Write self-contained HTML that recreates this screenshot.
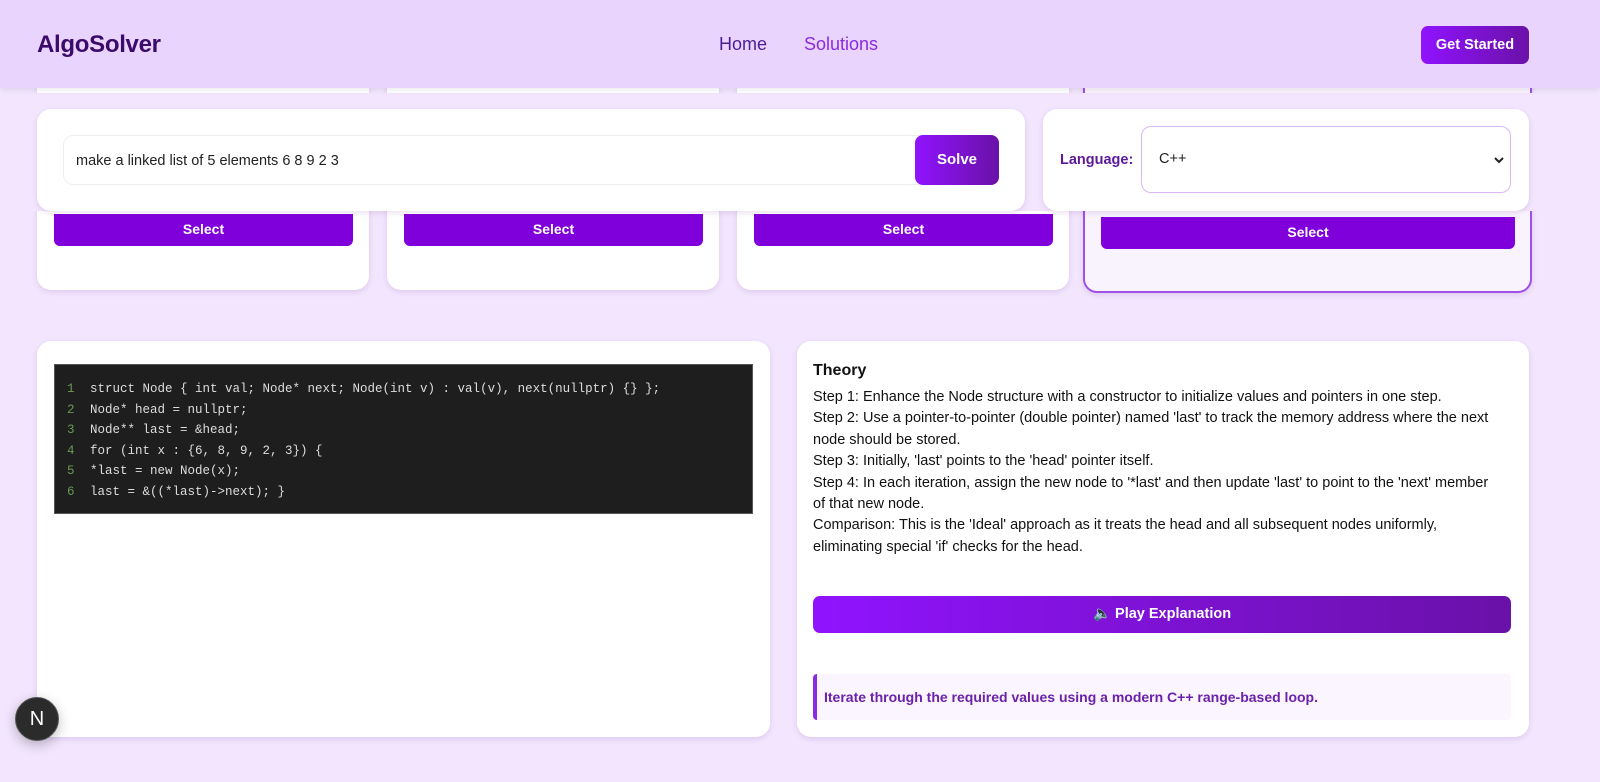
<!DOCTYPE html>
<html><head><meta charset="utf-8"><style>
*{box-sizing:border-box;margin:0;padding:0}
body{width:1600px;height:782px;overflow:hidden;background:#f2e5fd;font-family:"Liberation Sans",sans-serif;position:relative}
.abs{position:absolute}
.hdr{left:0;top:0;width:1600px;height:88px;background:#e8d4fd;box-shadow:0 2px 6px rgba(0,0,0,.08);z-index:5}
.logo{left:37px;top:31px;font-size:24px;font-weight:bold;color:#3b0a6b;letter-spacing:-0.3px}
.nav{top:34px;font-size:18px}
.grad{background:linear-gradient(90deg,#9013fe,#6a11a8)}
.card{background:#fff;border-radius:14px;box-shadow:0 2px 6px rgba(80,0,120,.12)}
.sel{background:#8000dc;color:#fff;font-size:14px;font-weight:bold;text-align:center;border-radius:0 0 6px 6px;line-height:28px}
.band{left:0;top:93px;width:1600px;height:118px;background:#f2e5fd;z-index:3}
.code{left:54px;top:364px;width:699px;height:150px;background:#1e1e1e;border:1px solid #555;font-family:"Liberation Mono",monospace;font-size:12.5px;color:#ddd;padding:14px 0 0 12px;line-height:20.5px}
.code span{color:#6a9955;display:inline-block;width:23px}
.th{font-size:14.5px;line-height:21.4px;color:#111}
</style></head><body>
<div class="abs hdr">
<div class="abs logo">AlgoSolver</div>
<div class="abs nav" style="left:719px;color:#4c1d95">Home</div>
<div class="abs nav" style="left:804px;color:#8a2be2">Solutions</div>
<div class="abs grad" style="left:1421px;top:26px;width:108px;height:38px;border-radius:7px;color:#fff;font-weight:bold;font-size:14.5px;text-align:center;line-height:38px">Get Started</div>
</div>
<!-- background cards -->
<div class="abs card" style="left:37px;top:60px;width:332px;height:230px"></div>
<div class="abs card" style="left:387px;top:60px;width:332px;height:230px"></div>
<div class="abs card" style="left:737px;top:60px;width:332px;height:230px"></div>
<div class="abs card" style="left:1083px;top:60px;width:449px;height:233px;background:#f9f3fe;border:2px solid #a050e8"></div>
<div class="abs sel" style="left:54px;top:214px;width:299px;height:32px;line-height:30px">Select</div>
<div class="abs sel" style="left:404px;top:214px;width:299px;height:32px;line-height:30px">Select</div>
<div class="abs sel" style="left:754px;top:214px;width:299px;height:32px;line-height:30px">Select</div>
<div class="abs sel" style="left:1101px;top:217px;width:414px;height:32px;line-height:30px">Select</div>
<div class="abs band"></div>
<div class="abs card" style="left:37px;top:109px;width:988px;height:102px;z-index:4">
<div class="abs" style="left:26px;top:26px;width:870px;height:50px;border:1px solid #eee;border-radius:10px;font-size:14.5px;color:#222;padding:0 12px;line-height:50px">make a linked list of 5 elements 6 8 9 2 3</div>
<div class="abs grad" style="left:878px;top:26px;width:84px;height:50px;border-radius:8px;color:#fff;font-weight:bold;font-size:15px;text-align:center;line-height:50px">Solve</div>
</div>
<div class="abs card" style="left:1043px;top:109px;width:486px;height:102px;z-index:4">
<div class="abs" style="left:17px;top:43px;font-size:14.5px;font-weight:bold;color:#5b1a99">Language:</div>
<div class="abs" style="left:98px;top:17px;width:370px;height:67px;border:1px solid #d9b8f5;border-radius:10px;font-size:14.5px;color:#222;padding-left:17px;line-height:65px">C++
<svg class="abs" style="right:6px;top:29px" width="10" height="8" viewBox="0 0 10 8"><path d="M1 2l4 4 4-4" stroke="#222" stroke-width="2" fill="none"/></svg></div>
</div>
<!-- code card -->
<div class="abs card" style="left:37px;top:341px;width:733px;height:396px"></div>
<div class="abs code">
<div><span>1</span>struct Node { int val; Node* next; Node(int v) : val(v), next(nullptr) {} };</div>
<div><span>2</span>Node* head = nullptr;</div>
<div><span>3</span>Node** last = &amp;head;</div>
<div><span>4</span>for (int x : {6, 8, 9, 2, 3}) {</div>
<div><span>5</span>*last = new Node(x);</div>
<div><span>6</span>last = &amp;((*last)-&gt;next); }</div>
</div>
<!-- theory card -->
<div class="abs card" style="left:797px;top:341px;width:732px;height:396px">
<div class="abs" style="left:16px;top:21px;font-size:16px;font-weight:bold;color:#111">Theory</div>
<div class="abs th" style="left:16px;top:46px;width:688px">Step 1: Enhance the Node structure with a constructor to initialize values and pointers in one step.<br>Step 2: Use a pointer-to-pointer (double pointer) named 'last' to track the memory address where the next node should be stored.<br>Step 3: Initially, 'last' points to the 'head' pointer itself.<br>Step 4: In each iteration, assign the new node to '*last' and then update 'last' to point to the 'next' member of that new node.<br>Comparison: This is the 'Ideal' approach as it treats the head and all subsequent nodes uniformly, eliminating special 'if' checks for the head.</div>
<div class="abs grad" style="left:16px;top:255px;width:698px;height:37px;border-radius:7px;color:#fff;font-weight:bold;font-size:14.5px;text-align:center;line-height:37px">🔈 Play Explanation</div>
<div class="abs" style="left:16px;top:333px;width:698px;height:46px;background:#faf5ff;border-left:4px solid #8a2be2;border-radius:4px;color:#6b21a8;font-weight:bold;font-size:14px;line-height:46px;padding-left:7px">Iterate through the required values using a modern C++ range-based loop.</div>
</div>
<div class="abs" style="left:15px;top:697px;width:44px;height:44px;border-radius:50%;background:#2b2b2b;border:1px solid #555;color:#fff;font-size:20px;text-align:center;line-height:42px;box-shadow:0 4px 12px rgba(0,0,0,.25);z-index:6">N</div>
</body></html>
